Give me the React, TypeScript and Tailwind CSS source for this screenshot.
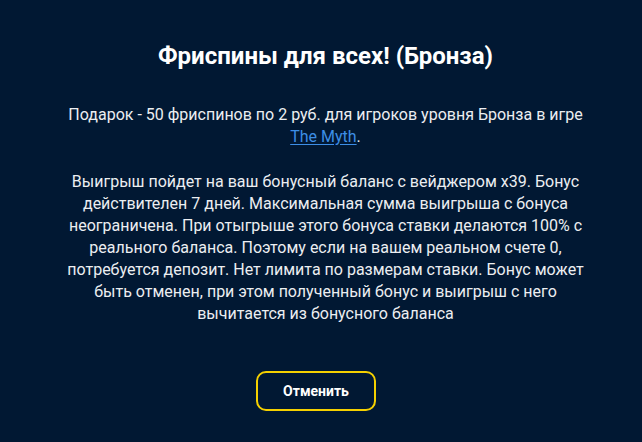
import React from 'react';

export default function App() {
  return (
    <div
      className="w-[642px] h-[442px] bg-[#011833] text-[#eceef1] flex flex-col items-center overflow-hidden pl-[9px]"
      style={{ fontFamily: 'Roboto, "Noto Sans", sans-serif' }}
    >
      {/* Title */}
      <h1 className="pt-[42px] text-[24px] leading-[28px] font-bold text-white text-center">
        Фриспины для всех! (Бронза)
      </h1>

      {/* Body */}
      <div className="mt-[34px] w-[532px] text-center text-[16px] leading-[22px]">
        <p>
          Подарок - 50 фриспинов по 2 руб. для игроков уровня Бронза в игре{' '}
          <a href="#" className="text-[#3d8ee6] underline underline-offset-2">The Myth</a>.
        </p>
        <p className="mt-[23px]">
          Выигрыш пойдет на ваш бонусный баланс с вейджером х39. Бонус действителен 7 дней.
          Максимальная сумма выигрыша с бонуса неограничена. При отыгрыше этого бонуса ставки
          делаются 100% с реального баланса. Поэтому если на вашем реальном счете 0, потребуется
          депозит. Нет лимита по размерам ставки. Бонус может быть отменен, при этом полученный
          бонус и выигрыш с него вычитается из бонусного баланса
        </p>
      </div>

      {/* Action */}
      <button className="mt-[46px] mr-[19px] w-[120px] h-[40px] rounded-[10px] border-2 border-[#f5d000] text-white text-[14px] font-bold">
        Отменить
      </button>
    </div>
  );
}
